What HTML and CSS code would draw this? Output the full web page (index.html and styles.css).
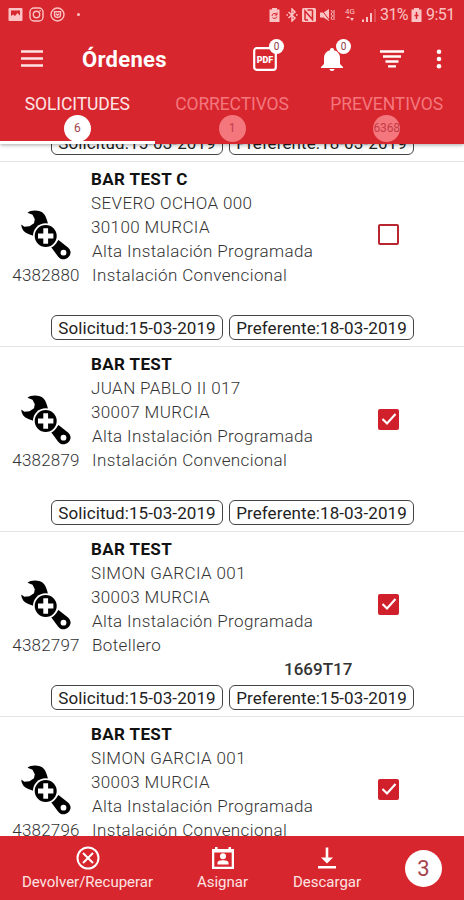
FILE: index.html
```html
<!DOCTYPE html>
<html lang="es">
<head>
    <meta charset="UTF-8">
    <meta name="viewport" content="width=device-width, initial-scale=1.0">
    <title>Órdenes</title>
    <link rel="stylesheet" href="styles.css">
</head>
<body>
    <!-- Shared icons -->
    <svg class="sprite" xmlns="http://www.w3.org/2000/svg">
        <symbol id="wrench" viewBox="0 0 50 50">
            <path d="M6.500 2.800C10-.2 19-.4 23 4c2 2.500 3 6 4 10L14 27c-2-1.500-4-2-6.500-3C3 22.500.5 19 .3 14.500l3 2.300 5.200-.5 4.500-3 .8-4-2.300-4.500z"/>
            <path d="M30 37l7.500-7 9.500 7.500c3.500 3 3.300 7 .3 9.700-3.300 3-7.300 3-10.300-.7z"/>
            <circle cx="24.700" cy="26" r="12.800" fill="#fff"/>
            <circle cx="24.700" cy="26" r="11"/>
            <path d="M22.300 18.300h4.800v5.300h5.300v4.800h-5.300v5.300h-4.800v-5.300H17v-4.800h5.300z" fill="#fff"/>
            <circle cx="42.500" cy="42.700" r="2.900" fill="#fff"/>
        </symbol>
    </svg>

    <div class="app">
        <header class="header">
            <div class="status-bar">
                <div class="status-left">
                    <svg width="15" height="15" viewBox="0 0 15 15"><rect x=".5" y="1" width="14" height="13" rx="1" fill="#fbc3c3"/><path d="M3 3.500h9v5L9.500 6 7 9 5 7.500 3 9z" fill="#d8262e"/></svg>
                    <svg width="15" height="15" viewBox="0 0 15 15" fill="none" stroke="#fbc3c3" stroke-width="1.400"><rect x="1" y="1" width="13" height="13" rx="4"/><circle cx="7.500" cy="7.500" r="3.200"/><path d="M10.500 3.800h1.300"/></svg>
                    <svg width="15" height="15" viewBox="0 0 15 15" fill="none" stroke="#fbc3c3" stroke-width="1.400"><circle cx="7.500" cy="7.500" r="6.500"/><path d="M4.500 4.800h6v3c0 3.500-6 3.500-6 0zM6 6.800l1.500 1.500L9 6.800"/></svg>
                    <span class="dot"></span>
                </div>
                <div class="status-right">
                    <svg width="11" height="14" viewBox="0 0 11 14"><path d="M3 0h5v1.500h2.500V14H.5V1.500H3z" fill="#fbc3c3"/><path d="M3 8a2.600 2.600 0 0 1 5-1M8 4.500V7H5.700M8 8.500a2.600 2.600 0 0 1-4.500 1" fill="none" stroke="#d8262e"/></svg>
                    <svg class="bluetooth" width="12" height="14" viewBox="0 0 12 14" fill="none" stroke="#fbc3c3" stroke-width="1.500"><path d="M2.500 4l6.500 6-3 3V1l3 3-6.500 6"/><path d="M.5 7h1.500M10 7h1.500"/></svg>
                    <svg width="14" height="14" viewBox="0 0 14 14"><rect width="14" height="14" rx="1.500" fill="#fbc3c3"/><path d="M3 12V3l7.500 8.500V2M5.500 2h5M3 12h3" fill="none" stroke="#d8262e" stroke-width="1.500"/></svg>
                    <svg width="15" height="14" viewBox="0 0 15 14"><path d="M0 4.500h3.500L9 1v12L3.500 9.500H0z" fill="#fbc3c3"/><path d="M1 1l9 12" stroke="#d8262e" stroke-width="1"/><path d="M11 2l1.500 2-1.500 2 1.500 2-1.500 2 1.500 2M14 2v10" fill="none" stroke="#fbc3c3"/></svg>
                    <div class="network"><span>4G</span><svg width="8" height="5" viewBox="0 0 8 5"><path d="M0 2l2-2 2 2zM4 2l2 3 2-3z" fill="#fbc3c3"/></svg></div>
                    <svg class="signal" width="14" height="14" viewBox="0 0 14 14" fill="#fbc3c3"><path d="M0 11.500h2V14H0zM4 9h2v5H4zM8 5h2v9H8z"/><path d="M12.500 1h1v13h-1z" opacity=".5"/></svg>
                    <span class="percent">31%</span>
                    <svg width="11" height="14" viewBox="0 0 11 14"><path d="M3 0h5v1.500h2.500V14H.5V1.500H3z" fill="#fbc3c3"/><path d="M5.500 4v7M3.500 7.500h4" stroke="#d8262e" stroke-width="1.400"/></svg>
                    <span class="clock">9:51</span>
                </div>
            </div>

            <div class="toolbar">
                <svg class="menu" width="22" height="17" viewBox="0 0 22 17"><path d="M0 1.500h22M0 8.500h22M0 15.500h22" stroke="#fde4e4" stroke-width="2.300"/></svg>
                <h1>Órdenes</h1>
                <div class="action pdf">
                    <svg width="24" height="24" viewBox="0 0 24 24"><rect x="1.200" y="1.200" width="21.600" height="21.600" rx="2.500" fill="none" stroke="#fff" stroke-width="2.200"/><text x="12" y="15.500" text-anchor="middle" class="pdf-text">PDF</text></svg>
                    <span class="count">0</span>
                </div>
                <div class="action bell">
                    <svg width="22" height="24" viewBox="0 0 22 24" fill="#fff"><path d="M11 1c1.400 0 2 .8 2 2.200 4 1 6 4 6 8.300V17l3 3v1H0v-1l3-3v-5.500c0-4.300 2-7.300 6-8.300C9 1.800 9.600 1 11 1zM8.500 22h5c0 2.500-5 2.500-5 0z"/></svg>
                    <span class="count">0</span>
                </div>
                <svg class="filter" width="24" height="18" viewBox="0 0 24 18"><path d="M0 1.500h24M3 6.500h18M5.500 11.500h13M8 16.300h8" stroke="#fff" stroke-width="2.300"/></svg>
                <svg class="more" width="6" height="20" viewBox="0 0 6 20" fill="#fff"><circle cx="3" cy="2.800" r="2.300"/><circle cx="3" cy="10" r="2.300"/><circle cx="3" cy="17.200" r="2.300"/></svg>
            </div>

            <nav class="tabs">
                <div class="tab active"><span>SOLICITUDES</span><span class="tab-count">6</span></div>
                <div class="tab"><span>CORRECTIVOS</span><span class="tab-count">1</span></div>
                <div class="tab"><span>PREVENTIVOS</span><span class="tab-count">6368</span></div>
            </nav>
        </header>

        <main class="list">
            <div class="order scrolled">
                <div class="dates"><span class="date">Solicitud:15-03-2019</span><span class="date">Preferente:18-03-2019</span></div>
            </div>

            <div class="order">
                <div class="order-body">
                    <div class="order-id"><svg width="50" height="50"><use href="#wrench"/></svg><span>4382880</span></div>
                    <div class="info">
                        <strong>BAR TEST C</strong>
                        <span class="addr">SEVERO OCHOA 000</span>
                        <span class="addr">30100 MURCIA</span>
                        <span class="kind">Alta Instalación Programada</span>
                        <span class="kind">Instalación Convencional</span>
                    </div>
                    <span class="check"></span>
                </div>
                <div class="code"></div>
                <div class="dates"><span class="date">Solicitud:15-03-2019</span><span class="date">Preferente:18-03-2019</span></div>
            </div>

            <div class="order">
                <div class="order-body">
                    <div class="order-id"><svg width="50" height="50"><use href="#wrench"/></svg><span>4382879</span></div>
                    <div class="info">
                        <strong>BAR TEST</strong>
                        <span class="addr">JUAN PABLO II 017</span>
                        <span class="addr">30007 MURCIA</span>
                        <span class="kind">Alta Instalación Programada</span>
                        <span class="kind">Instalación Convencional</span>
                    </div>
                    <span class="check checked"><svg width="16" height="14" viewBox="0 0 16 14"><path d="M1.500 7l4.500 4.500L14.500 2"/></svg></span>
                </div>
                <div class="code"></div>
                <div class="dates"><span class="date">Solicitud:15-03-2019</span><span class="date">Preferente:18-03-2019</span></div>
            </div>

            <div class="order">
                <div class="order-body">
                    <div class="order-id"><svg width="50" height="50"><use href="#wrench"/></svg><span>4382797</span></div>
                    <div class="info">
                        <strong>BAR TEST</strong>
                        <span class="addr">SIMON GARCIA 001</span>
                        <span class="addr">30003 MURCIA</span>
                        <span class="kind">Alta Instalación Programada</span>
                        <span class="kind">Botellero</span>
                    </div>
                    <span class="check checked"><svg width="16" height="14" viewBox="0 0 16 14"><path d="M1.500 7l4.500 4.500L14.500 2"/></svg></span>
                </div>
                <div class="code">1669T17</div>
                <div class="dates"><span class="date">Solicitud:15-03-2019</span><span class="date">Preferente:15-03-2019</span></div>
            </div>

            <div class="order">
                <div class="order-body">
                    <div class="order-id"><svg width="50" height="50"><use href="#wrench"/></svg><span>4382796</span></div>
                    <div class="info">
                        <strong>BAR TEST</strong>
                        <span class="addr">SIMON GARCIA 001</span>
                        <span class="addr">30003 MURCIA</span>
                        <span class="kind">Alta Instalación Programada</span>
                        <span class="kind">Instalación Convencional</span>
                    </div>
                    <span class="check checked"><svg width="16" height="14" viewBox="0 0 16 14"><path d="M1.500 7l4.500 4.500L14.500 2"/></svg></span>
                </div>
            </div>
        </main>

        <footer class="footer">
            <div class="foot-item return">
                <svg width="24" height="24" viewBox="0 0 24 24" fill="none" stroke="#fff" stroke-width="2"><circle cx="12" cy="12" r="10.500"/><path d="M7 7l10 10M17 7L7 17"/></svg>
                <span>Devolver/Recuperar</span>
            </div>
            <div class="foot-item assign">
                <svg width="24" height="24" viewBox="0 0 24 24" fill="#fff"><path d="M1 3h3V1h2.500v2h11V1H20v2h3v20H1zM3.300 6.500v14.200h17.400V6.500z" fill-rule="evenodd"/><circle cx="12" cy="10.300" r="3"/><path d="M6.500 18.500v-2c0-3 11-3 11 0v2z"/></svg>
                <span>Asignar</span>
            </div>
            <div class="foot-item download">
                <svg width="24" height="24" viewBox="0 0 24 24" fill="#fff"><path d="M10.700 1.500h2.600v10H18l-6 6-6-6h4.700zM3 20h18v2.500H3z"/></svg>
                <span>Descargar</span>
            </div>
            <span class="total">3</span>
        </footer>
    </div>
</body>
</html>
```
FILE: styles.css
```css
* {
    box-sizing: border-box;
}

body {
    margin: 0;
    font-family: Roboto, sans-serif;
    background-color: #fff;
}

svg {
    display: block;
    flex: none;
}

.sprite {
    display: none;
}

.app {
    display: flex;
    flex-direction: column;
    width: 464px;
    height: 900px;
    overflow: hidden;
}

.header {
    flex: none;
    height: 144px;
    background-color: #d8262e;
    color: #fff;
    box-shadow: 0 1px 4px rgba(0, 0, 0, 0.35);
    z-index: 1;
}

.status-bar {
    display: flex;
    justify-content: space-between;
    height: 29px;
    padding: 0 9px 0 8px;
    color: #fbc3c3;
}

.status-left,
.status-right {
    display: flex;
    align-items: center;
}

.status-left {
    gap: 6px;
}

.dot {
    width: 3px;
    height: 3px;
    margin-left: 6px;
    border-radius: 50%;
    background-color: #fbc3c3;
}

.status-right {
    gap: 4px;
    font-size: 16px;
}

.bluetooth {
    margin-left: 2px;
}

.network {
    display: flex;
    flex-direction: column;
    align-items: center;
    width: 12px;
    margin-left: 5px;
    font-size: 8px;
    line-height: 8px;
}

.signal {
    margin-left: 2px;
}

.percent {
    width: 27px;
    letter-spacing: -0.6px;
}

.clock {
    width: 29px;
    letter-spacing: -0.5px;
}

.toolbar {
    display: flex;
    align-items: center;
    height: 59px;
    padding: 0 21px;
}

h1 {
    width: 171px;
    margin: 1px 0 0 39px;
    font-size: 22px;
    font-weight: 700;
    letter-spacing: 0.3px;
}

.action {
    position: relative;
}

.bell {
    margin-left: 44px;
}

.pdf-text {
    fill: #fff;
    font-size: 9px;
    font-weight: 900;
}

.count {
    position: absolute;
    top: -8px;
    right: -7px;
    width: 15px;
    height: 15px;
    border-radius: 50%;
    background-color: #fff;
    color: #8f3944;
    font-size: 10px;
    line-height: 15px;
    text-align: center;
}

.bell .count {
    right: -8px;
}

.filter {
    margin: 1px 0 0 37px;
}

.more {
    margin-left: 32px;
}

.tabs {
    display: flex;
    height: 56px;
}

.tab {
    display: flex;
    flex: 1;
    flex-direction: column;
    align-items: center;
    padding-top: 6px;
    border-bottom: 3px solid transparent;
    color: #f3777d;
    font-size: 17.5px;
    line-height: 20px;
    letter-spacing: -0.1px;
}

.tab.active {
    border-color: #fff;
    color: #fde4e4;
}

.tab-count {
    width: 27px;
    height: 27px;
    margin-top: 1px;
    border-radius: 50%;
    background-color: #f3777d;
    color: #c83c47;
    font-size: 12px;
    line-height: 27px;
    text-align: center;
}

.active .tab-count {
    background-color: #fff;
    color: #a5434d;
}

.list {
    flex: 1;
    min-height: 0;
    overflow: hidden;
}

.order {
    height: 185px;
    padding-top: 5px;
    border-top: 1px solid #e4e4e4;
}

.order.scrolled {
    height: 31px;
    margin-top: -14px;
    padding: 0;
    border: 0;
}

.order-body {
    display: flex;
    height: 120px;
}

.order-id {
    display: flex;
    flex-direction: column;
    align-items: center;
    width: 92px;
    padding-top: 43px;
    color: #333;
    font-size: 17px;
    font-weight: 300;
    line-height: 24px;
    letter-spacing: 0.2px;
}

.order-id svg {
    margin-bottom: 3px;
}

.info {
    display: flex;
    flex-direction: column;
    width: 286px;
    color: #333;
    font-size: 17px;
    font-weight: 300;
    line-height: 24px;
    letter-spacing: 0.38px;
}

.info strong {
    color: #111;
    font-weight: 700;
    margin-left: -1px;
}

.addr {
    margin-left: -1px;
}

.check {
    width: 21px;
    height: 21px;
    margin-top: 57px;
    border: 2px solid #b82630;
    border-radius: 2px;
}

.checked {
    padding: 1px 0 0 1px;
    background-color: #d0202b;
    border-color: #d0202b;
}

.check path {
    fill: none;
    stroke: #fff;
    stroke-width: 2.2;
}

.code {
    height: 28px;
    padding-left: 284px;
    color: #333;
    font-size: 17px;
    font-weight: 500;
    line-height: 24px;
}

.dates {
    display: flex;
    gap: 6px;
    padding-left: 51px;
}

.date {
    width: 172px;
    height: 25px;
    border: 1px solid #444;
    border-radius: 6px;
    color: #222;
    font-size: 17px;
    line-height: 25px;
    letter-spacing: 0.1px;
    text-align: center;
    white-space: nowrap;
}

.date + .date {
    width: 185px;
}

.footer {
    display: flex;
    flex: none;
    height: 64px;
    background-color: #d8262e;
    color: #fde4e4;
}

.foot-item {
    display: flex;
    flex-direction: column;
    align-items: center;
    padding-top: 10px;
    font-size: 15px;
    line-height: 24px;
}

.return {
    width: 175px;
}

.assign {
    width: 95px;
}

.download {
    width: 114px;
}

.total {
    width: 37px;
    height: 37px;
    margin: 14px 0 0 21px;
    border-radius: 50%;
    background-color: #fff;
    color: #a5434d;
    font-size: 22px;
    line-height: 38px;
    text-align: center;
}
```
